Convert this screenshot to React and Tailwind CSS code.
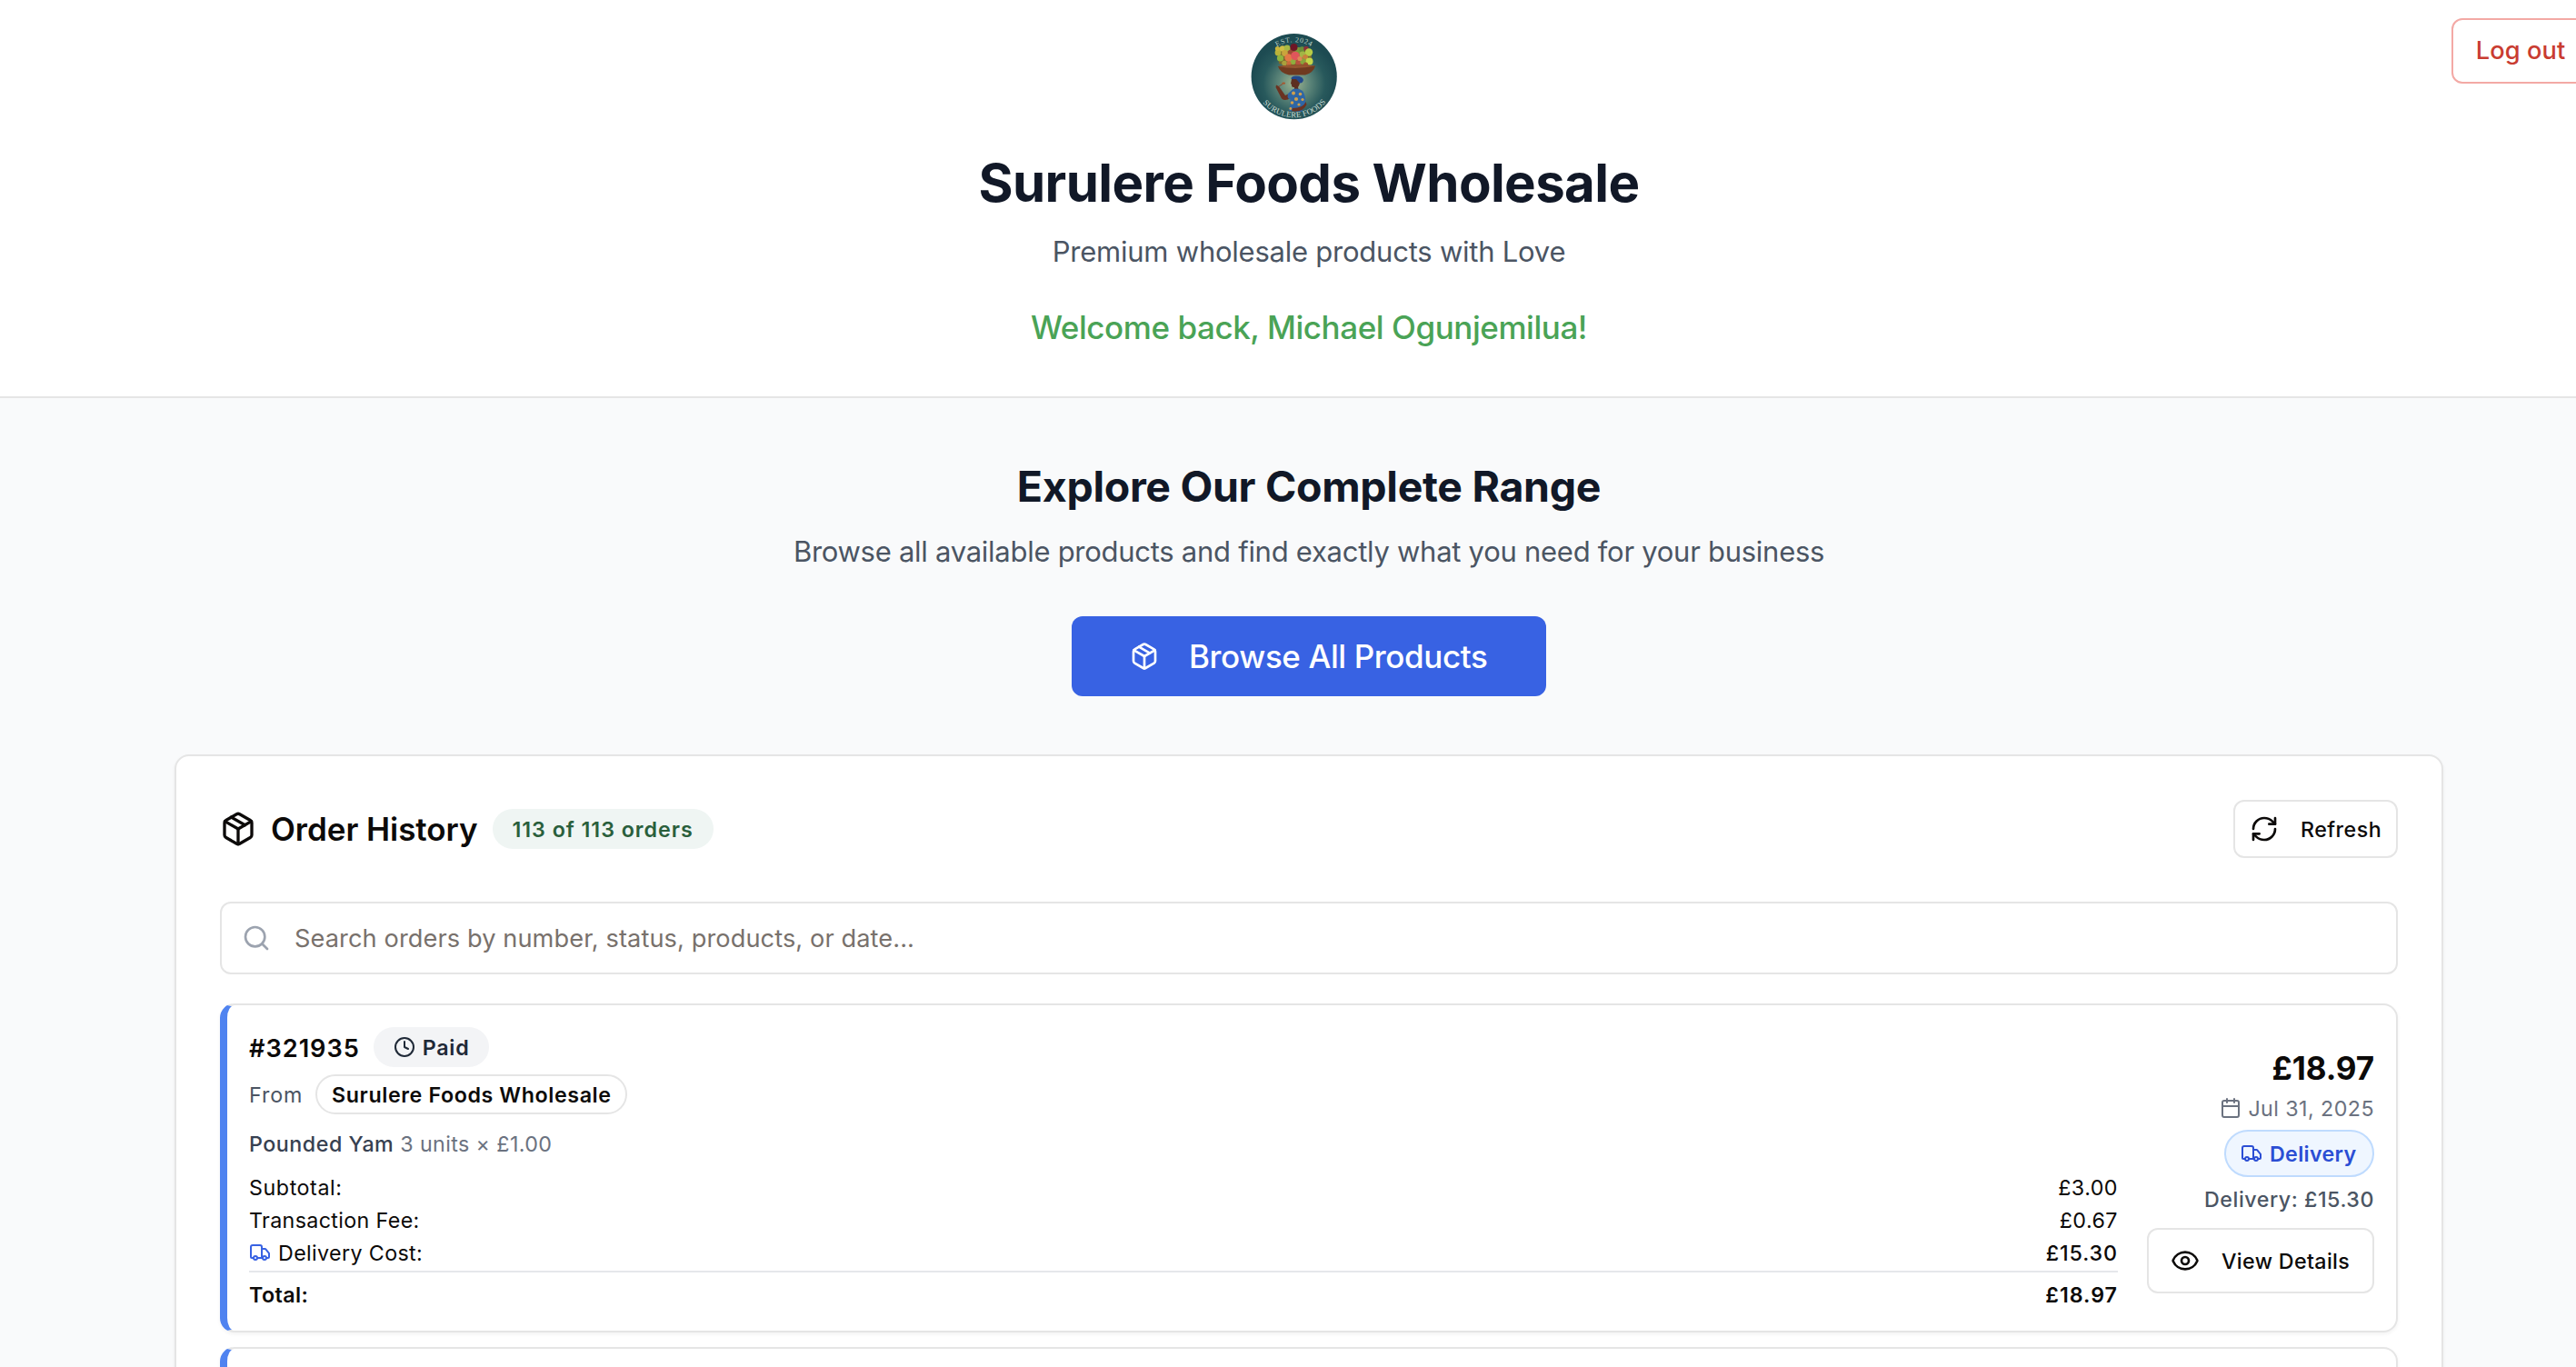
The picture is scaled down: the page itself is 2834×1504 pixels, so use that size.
import React from 'react';
import { Clock, RefreshCw, Search, Calendar, Eye } from 'lucide-react';

function BoxIcon({ className }) {
  return (
    <svg className={className} viewBox="0 0 24 24" fill="none" stroke="currentColor" strokeWidth="2" strokeLinecap="round" strokeLinejoin="round">
      <path d="m7.5 4.27 9 5.15" />
      <path d="M21 8a2 2 0 0 0-1-1.73l-7-4a2 2 0 0 0-2 0l-7 4A2 2 0 0 0 3 8v8a2 2 0 0 0 1 1.73l7 4a2 2 0 0 0 2 0l7-4A2 2 0 0 0 21 16Z" />
      <path d="m3.3 7 8.7 5 8.7-5" />
      <path d="M12 22V12" />
    </svg>
  );
}

function TruckIcon({ className }) {
  return (
    <svg className={className} viewBox="0 0 24 24" fill="none" stroke="currentColor" strokeWidth="2" strokeLinecap="round" strokeLinejoin="round">
      <path d="M14 18V6a2 2 0 0 0-2-2H4a2 2 0 0 0-2 2v11a1 1 0 0 0 1 1h2" />
      <path d="M15 18H9" />
      <path d="M19 18h2a1 1 0 0 0 1-1v-3.65a1 1 0 0 0-.22-.624l-3.48-4.35A1 1 0 0 0 17.52 8H14" />
      <circle cx="17" cy="18" r="2" />
      <circle cx="7" cy="18" r="2" />
    </svg>
  );
}

const fruit = [
  [30, 22, 3.4, '#b9b23a'], [35, 17.5, 3.2, '#d0be45'], [29.5, 17.5, 2.6, '#c9b53c'], [32.5, 28, 3.6, '#8fb53f'],
  [40, 17, 3.4, '#a9b944'], [37.5, 22.5, 3.4, '#c9a53c'], [44, 22, 3.2, '#9c4b33'], [52, 19.5, 3.4, '#7b9a3a'],
  [56.5, 18.5, 3.2, '#6c8f3a'], [61, 17.5, 2.8, '#8a3038'], [47.5, 16, 4, '#6d1626'], [57, 24, 3.6, '#a3b545'],
  [64, 21.5, 4.2, '#b8cc46'], [60, 27, 3, '#c9813c'], [46.5, 31.5, 3.4, '#8fae3e'], [52.5, 33, 3.2, '#b9513f'],
  [57.5, 31.5, 3.2, '#88a53d'], [64.5, 31.5, 4, '#c5d64a'], [37, 33.5, 2.8, '#a9a03c'], [42, 34, 2.6, '#c96a3c'],
  [60.5, 35, 2.6, '#a4512f'], [41.5, 27.5, 4.2, '#e27a45'], [49, 25.5, 4.8, '#e0565a'], [54, 28.5, 2.6, '#dd8a55'],
];

const dots = [
  [47, 66.5, 2], [54.5, 67.5, 1.8], [50, 73, 2.1], [57, 73.5, 1.6], [45.5, 77, 1.8], [53, 79, 1.6], [43.8, 83.5, 1.4],
];

function Logo() {
  return (
    <svg className="size-24" viewBox="0 0 96 96">
      <defs>
        <radialGradient id="glow" cx="0.5" cy="0.58" r="0.5">
          <stop offset="0" stopColor="#9fb58f" />
          <stop offset="0.35" stopColor="#5f877a" />
          <stop offset="0.72" stopColor="#28595c" />
          <stop offset="1" stopColor="#1d4b52" />
        </radialGradient>
        <path id="arcTop" d="M 9.700 48.200 A 38 38 0 0 1 85.700 48.200" />
        <path id="arcBottom" d="M 2.700 48.200 A 45 45 0 0 0 92.700 48.200" />
      </defs>
      <circle cx="47.7" cy="48.2" r="47.1" fill="url(#glow)" />
      <path d="M29 19 Q47 12 66 19 L68 34 Q50 40 31 34Z" fill="#7d6a2e" />
      {fruit.map(([x, y, r, c], i) => (
        <circle key={i} cx={x} cy={y} r={r} fill={c} />
      ))}
      <path d="M30 37 Q50 34 71 36.500 Q69 44 60 46.500 L42 46.500 Q32 44 30 37Z" fill="#6f3a20" />
      <path d="M30 37 Q50 34 71 36.500 Q50 41 30 37Z" fill="#96552f" />
      <path d="M44.500 51 Q44 47.500 50 47.500 Q57 47.500 58 52 Q57 56 53.500 55.500 L49 51.500Z" fill="#23498c" />
      <path d="M45 51 L50 51 L54 55.500 Q53 59 52 60 L53 64 L48 64 L48 60 Q44.500 60.500 45 57 L44 56Z" fill="#5d2f20" />
      <path d="M44 66 L38 69 L31 59 L28 57.500 L27.500 60 L34 72.500 Q38 76 44 71.500Z" fill="#6a3322" />
      <path d="M31 59 L35 56.500" stroke="#8f4a2c" strokeWidth="1" />
      <ellipse cx="36.200" cy="55.600" rx="1.900" ry="1.200" fill="#a7582f" />
      <path d="M46.500 62 Q52 60.500 57 64 Q61 70 60 78 L56 87 L42 86 Q44 79 43.500 73 Q39.500 73 41 67Z" fill="#2f66a5" />
      {dots.map(([x, y, r], i) => (
        <circle key={i} cx={x} cy={y} r={r} fill="#d0a04c" />
      ))}
      <path d="M60.500 76 Q58 83 46 83 L45 86 Q57 88.500 61.500 79Z" fill="#6a3322" />
      <text fill="#b9cfc6" fontSize="8" letterSpacing="0.7" textAnchor="middle" className="font-['Liberation_Serif']">
        <textPath href="#arcTop" startOffset="50%">EST. 2024</textPath>
      </text>
      <text fill="#cfded6" fontSize="8.800" letterSpacing="0.2" textAnchor="middle" className="font-['Liberation_Serif']">
        <textPath href="#arcBottom" startOffset="50.500%">SURULERE FOODS</textPath>
      </text>
    </svg>
  );
}

function Header() {
  return (
    <header className="grid h-[438px] grid-cols-[1fr_800px_1fr] border-b-2 border-[#e5e5e5] bg-white">
      <div />
      <div className="flex flex-col items-center pt-9 whitespace-nowrap">
        <div className="mr-8">
          <Logo />
        </div>
        <h1 className="mt-[33px] text-[58.2px] leading-[72px] font-bold tracking-[-0.619px] text-[#111827]">Surulere Foods Wholesale</h1>
        <p className="mt-4 text-[31px] leading-[48px] tracking-[-0.234px] text-[#4b5563]">Premium wholesale products with Love</p>
        <p className="mt-[31px] text-[35px] leading-[56px] font-medium tracking-[-0.444px] text-[#4aa356]">Welcome back, Michael Ogunjemilua!</p>
      </div>
      <button className="mt-5 mr-[31px] h-[72px] w-[152px] justify-self-end rounded-xl border-2 border-[#f3a9a5] bg-white text-[27.2px] font-medium tracking-[0.106px] whitespace-nowrap text-[#c93c31]">
        <span className="block pt-px">Log out</span>
      </button>
    </header>
  );
}

function Explore() {
  return (
    <section className="flex flex-col items-center pt-[65px] whitespace-nowrap">
      <h2 className="text-[46.5px] leading-[64px] font-bold tracking-[-0.31px] text-[#111827]">Explore Our Complete Range</h2>
      <p className="mt-3 text-[31px] leading-[56px] tracking-[-0.272px] text-[#4b5563]">
        Browse all available products and find exactly what you need for your business
      </p>
      <button className="mt-[43px] flex h-[88px] w-[522px] items-center rounded-xl bg-[#3862e3] pl-16 text-[35px] font-medium tracking-[-0.384px] text-white">
        <BoxIcon className="size-8" />
        <span className="ml-[33px]">Browse All Products</span>
      </button>
    </section>
  );
}

function Row({ icon, label, labelClass, value, valueClass }) {
  return (
    <div className="flex h-8 justify-between">
      <span className="flex items-center gap-2">
        {icon}
        <span className={labelClass}>{label}</span>
      </span>
      <span className={valueClass}>{value}</span>
    </div>
  );
}

function OrderFrame({ children }) {
  return (
    <article className="flex h-[362px] items-center gap-8 rounded-2xl border-2 border-l-8 border-[#e5e5e5] border-l-[#4f83f0] bg-white p-6 text-[23.25px] leading-[31px] whitespace-nowrap shadow-[0_2px_4px_rgba(0,0,0,0.05)]">
      {children}
    </article>
  );
}

function OrderCard() {
  return (
    <OrderFrame>
      <div className="flex-1">
        <div className="flex h-11 items-center">
          <span className="pt-0.5 text-[27.2px] font-semibold tracking-[0.964px]">#321935</span>
          <span className="ml-[15px] flex h-11 w-[127px] items-center rounded-full bg-[#f3f4f6] pl-[22px] font-semibold tracking-[0.724px] text-[#1f2937]">
            <Clock className="size-6" />
            <span className="ml-2 pt-px">Paid</span>
          </span>
        </div>
        <div className="mt-2 flex h-11 items-center">
          <span className="pt-px tracking-[0.9px] text-[#4b5563]">From</span>
          <span className="ml-3.5 flex h-11 w-[343px] items-center justify-center rounded-full border-2 border-[#e5e5e5] font-semibold tracking-[0.596px]">
            <span className="pt-px">Surulere Foods Wholesale</span>
          </span>
        </div>
        <div className="mt-4 flex h-8">
          <span className="pt-px font-medium tracking-[0.521px] text-[#374151]">Pounded Yam</span>
          <span className="ml-[7px] pt-px tracking-[0.388px] text-[#6b7280]">3 units × £1.00</span>
        </div>
        <div className="mt-4 flex flex-col gap-1">
          <Row label="Subtotal:" labelClass="pt-px tracking-[0.58px]" value="£3.00" valueClass="pt-px tracking-[0.471px]" />
          <Row label="Transaction Fee:" labelClass="pt-px tracking-[0.359px]" value="£0.67" valueClass="pt-px tracking-[0.474px]" />
          <Row
            icon={<TruckIcon className="size-6 text-[#3862e3]" />}
            label="Delivery Cost:"
            labelClass="pt-px tracking-[0.37px]"
            value="£15.30"
            valueClass="pt-px font-medium tracking-[0.9px]"
          />
          <div className="border-t-2 border-[#e5e7eb] pt-2 font-semibold">
            <Row label="Total:" labelClass="pt-px tracking-[0.4px]" value="£18.97" valueClass="pt-px tracking-[0.98px]" />
          </div>
        </div>
      </div>
      <div className="flex w-[250px] flex-col items-end">
        <span className="text-[35px] leading-[56px] font-bold tracking-[-0.096px]">£18.97</span>
        <span className="flex h-8 items-center gap-[7px] tracking-[0.43px] text-[#6b7280]">
          <Calendar className="size-6" />
          <span className="pt-px">Jul 31, 2025</span>
        </span>
        <span className="mt-2 flex h-[52px] w-[165px] items-center gap-2 rounded-full border-2 border-[#bfdbfe] bg-[#eff6ff] pl-4 font-semibold tracking-[0.32px] text-[#2b4ed4]">
          <TruckIcon className="size-6" />
          <span className="pt-px">Delivery</span>
        </span>
        <span className="mt-2 pt-px font-medium tracking-[0.521px] text-[#4b5563]">Delivery: £15.30</span>
        <button className="mt-4 flex h-[72px] w-full items-center rounded-xl border-2 border-[#e5e5e5] pl-6 font-medium tracking-[0.348px]">
          <Eye className="size-8" />
          <span className="ml-6 pt-px">View Details</span>
        </button>
      </div>
    </OrderFrame>
  );
}

export default function App() {
  return (
    <div className="h-[1504px] w-[2834px] overflow-hidden bg-[#f9fafb] font-['Inter',sans-serif] text-[#0c0a09]">
      <div className="w-[2880px]">
        <Header />
        <Explore />
        <section className="mt-16 ml-48 h-[1100px] w-[2496px] rounded-2xl border-2 border-[#e5e5e5] bg-white p-12 whitespace-nowrap shadow-[0_2px_4px_rgba(0,0,0,0.05)]">
          <div className="flex h-16 items-center">
            <BoxIcon className="size-10" />
            <h3 className="ml-4 text-[35px] font-semibold tracking-[-0.043px]">Order History</h3>
            <span className="ml-4 flex h-11 w-[243px] items-center justify-center rounded-full bg-[#eff5f3] text-[23.25px] leading-[31px] font-semibold tracking-[0.96px] text-[#2a5f3c]">
              <span className="pt-px">113 of 113 orders</span>
            </span>
            <button className="ml-auto flex h-16 w-[181px] items-center rounded-xl border-2 border-[#e5e5e5] pl-4 text-[23.25px] leading-[31px] font-medium tracking-[0.458px]">
              <RefreshCw className="size-8" />
              <span className="ml-6 pt-px">Refresh</span>
            </button>
          </div>
          <div className="mt-12 flex h-20 items-center rounded-xl border-2 border-[#e5e5e5] pl-[22px] text-[27.2px] tracking-[0.092px] text-[#78716c]">
            <Search className="size-8 text-[#9ca3af]" />
            <span className="ml-[26px] pt-0.5">Search orders by number, status, products, or date...</span>
          </div>
          <div className="mt-8 flex flex-col gap-4">
            <OrderCard />
            <OrderFrame />
          </div>
        </section>
      </div>
    </div>
  );
}
